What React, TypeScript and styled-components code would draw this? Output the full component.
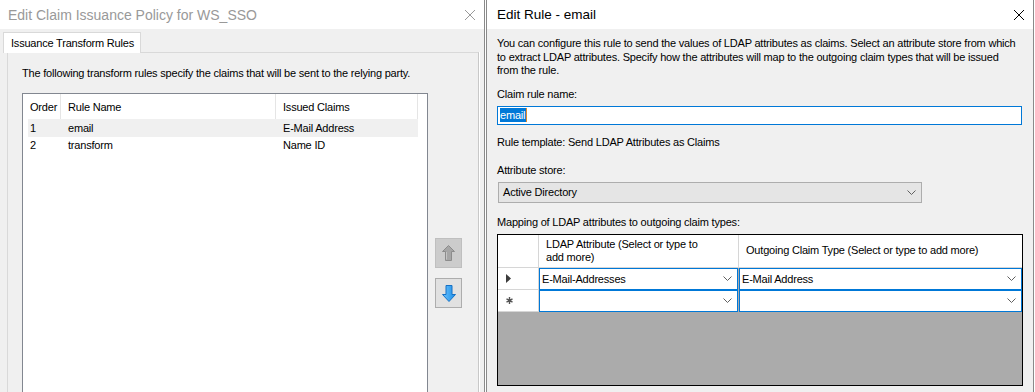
import React from "react";
import styled, { createGlobalStyle } from "styled-components";

const GlobalStyle = createGlobalStyle`
  html, body {
    margin: 0;
    padding: 0;
    background: #ffffff;
    overflow: hidden;
  }
  body {
    font-family: "Liberation Sans", Arial, sans-serif;
    font-size: 11px;
    letter-spacing: -0.2px;
    color: #000;
  }
`;

const rules = [
  { order: 1, name: "email", claims: "E-Mail Address", selected: true },
  { order: 2, name: "transform", claims: "Name ID", selected: false },
];

const Desktop = styled.div`
  display: flex;
  height: 392px;
  overflow: hidden;
`;

const Dialog = styled.div<{ $width: number }>`
  width: ${(p) => p.$width}px;
  flex-shrink: 0;
  display: flex;
  flex-direction: column;
  border-left: 1px solid #8a8a8a;
  border-right: 1px solid #8a8a8a;
  box-sizing: border-box;
  height: 420px;
`;

const LeftDialog = styled(Dialog)`
  border-left: none;
  margin-right: 1px;
`;

const TitleBar = styled.div<{ $inactive?: boolean }>`
  height: 29px;
  flex-shrink: 0;
  background: #fff;
  display: flex;
  align-items: center;
  justify-content: space-between;
  padding: 0 8px 0 ${(p) => (p.$inactive ? 8 : 10)}px;
  font-size: ${(p) => (p.$inactive ? 14 : 13.5)}px;
  letter-spacing: 0;
  color: ${(p) => (p.$inactive ? "#999" : "#000")};
`;

const CloseIcon = ({ color }: { color: string }) => (
  <svg width="12" height="12" viewBox="0 0 12 12">
    <path d="M1 1 L11 11 M11 1 L1 11" stroke={color} strokeWidth="1" fill="none" />
  </svg>
);

const Body = styled.div`
  flex: 1;
  background: #f0f0f0;
  display: flex;
  flex-direction: column;
`;

const TabStrip = styled.div`
  display: flex;
  padding: 3px 0 0 3px;
  position: relative;
  z-index: 1;
  margin-bottom: -1px;
`;

const Tab = styled.div`
  height: 20px;
  padding: 0 6px 0 7px;
  display: flex;
  align-items: center;
  background: #fff;
  border: 1px solid #d9d9d9;
  border-bottom: none;
`;

const TabPage = styled.div`
  flex: 1;
  margin: 0 5px 0 7px;
  border: 1px solid #d9d9d9;
  border-right-color: #c8c8c8;
  box-shadow: 1px 0 0 #fff;
  padding: 13px 0 0 14px;
  display: flex;
  flex-direction: column;
`;

const Caption = styled.div`
  line-height: 14px;
`;

const ListRow = styled.div`
  display: flex;
  margin-top: 13px;
  flex: 1;
`;

const ListView = styled.div`
  width: 406px;
  background: #fff;
  border: 1px solid #828790;
  box-sizing: border-box;
  padding: 0 9px 0 5px;
`;

const ListHeader = styled.div`
  display: grid;
  grid-template-columns: 33px 215px 142px;
  height: 25px;
`;

const HeaderCell = styled.div<{ $first?: boolean }>`
  display: flex;
  align-items: center;
  padding-left: ${(p) => (p.$first ? 2 : 7)}px;
  border-right: 1px solid #e5e5e5;
`;

const ListItem = styled.div<{ $selected?: boolean }>`
  display: grid;
  grid-template-columns: 33px 215px 142px;
  height: 17.5px;
  align-items: center;
  background: ${(p) => (p.$selected ? "#f0f0f0" : "transparent")};
`;

const ItemCell = styled.div<{ $first?: boolean }>`
  padding-left: ${(p) => (p.$first ? 2 : 7)}px;
`;

const ButtonColumn = styled.div`
  display: flex;
  flex-direction: column;
  gap: 10px;
  padding: 145px 0 0 7px;
`;

const MoveButton = styled.div<{ $disabled?: boolean }>`
  width: 27px;
  height: 30px;
  box-sizing: border-box;
  border: 1px solid ${(p) => (p.$disabled ? "#bfbfbf" : "#adadad")};
  background: ${(p) => (p.$disabled ? "#cccccc" : "#e1e1e1")};
  display: flex;
  align-items: center;
  justify-content: center;
`;

const UpArrow = () => (
  <svg width="13" height="16" viewBox="0 0 13 16">
    <path
      d="M6.5 0.5 L12.5 6.5 L9.5 6.5 L9.5 15.5 L3.5 15.5 L3.5 6.5 L0.5 6.5 Z"
      fill="#a6a6a6"
      stroke="#8c8c8c"
      strokeWidth="1"
    />
    <path d="M4.5 7 L4.5 14.5" stroke="#c4c4c4" strokeWidth="1" />
  </svg>
);

const DownArrow = () => (
  <svg width="14" height="17" viewBox="0 0 14 17">
    <defs>
      <linearGradient id="dg" x1="0" x2="1" y1="0" y2="0">
        <stop offset="0" stopColor="#6cc4ff" />
        <stop offset="1" stopColor="#1a8ce6" />
      </linearGradient>
    </defs>
    <path
      d="M4 0.5 L10 0.5 L10 9.5 L13.5 9.5 L7 16.5 L0.5 9.5 L4 9.5 Z"
      fill="url(#dg)"
      stroke="#1670c4"
      strokeWidth="1"
    />
  </svg>
);

const RightBody = styled(Body)`
  padding: 8px 12px 0 10px;
`;

const Paragraph = styled.div`
  line-height: 13.5px;
  white-space: nowrap;
`;

const Label = styled.div<{ $gap: number }>`
  margin-top: ${(p) => p.$gap}px;
  line-height: 14px;
`;

const TextInput = styled.div`
  margin-top: 5px;
  height: 19px;
  width: 525px;
  box-sizing: border-box;
  border: 1px solid #0078d7;
  background: #fff;
  display: flex;
  align-items: center;
  padding-left: 2px;
`;

const Selected = styled.span`
  background: #0078d7;
  color: #fff;
  line-height: 14px;
  padding-right: 1px;
  border-right: 1px solid #e08a2c;
`;

const ComboBox = styled.div`
  margin: 5px 0 0 1px;
  width: 424px;
  height: 21px;
  box-sizing: border-box;
  border: 1px solid #adadad;
  background: #e5e5e5;
  display: flex;
  align-items: center;
  justify-content: space-between;
  padding: 0 5px 0 4px;
`;

const Chevron = () => (
  <svg width="9" height="5" viewBox="0 0 9 5">
    <path d="M0.5 0.5 L4.5 4.5 L8.5 0.5" stroke="#606060" strokeWidth="1" fill="none" />
  </svg>
);

const Grid = styled.div`
  margin-top: 5px;
  width: 526px;
  height: 152px;
  box-sizing: border-box;
  border: 1px solid #000;
  background: #ababab;
`;

const GridRow = styled.div<{ $height: number }>`
  display: grid;
  grid-template-columns: 41px 200px 283px;
  height: ${(p) => p.$height}px;
`;

const GridHeaderCell = styled.div`
  background: #fff;
  border-right: 1px solid #d6d6d6;
  border-bottom: 1px solid #d6d6d6;
  display: flex;
  align-items: center;
  padding: 0 20px 0 7px;
  line-height: 13px;
  &:last-child {
    border-right: none;
    padding-right: 4px;
  }
`;

const RowHeader = styled.div`
  background: #fff;
  border-right: 1px solid #d6d6d6;
  border-bottom: 1px solid #d6d6d6;
  display: flex;
  align-items: center;
  padding-left: 8px;
`;

const CellCombo = styled.div`
  border: 1px solid #0078d7;
  background: #fff;
  display: flex;
  align-items: center;
  justify-content: space-between;
  padding: 0 5px 0 2px;
  margin-right: 1px;
  &:last-child {
    margin-right: 0;
  }
`;

const CurrentRowIcon = () => (
  <svg width="5" height="9" viewBox="0 0 5 9">
    <path d="M0 0 L5 4.5 L0 9 Z" fill="#3c3c3c" />
  </svg>
);

const NewRowIcon = () => (
  <svg width="7" height="7" viewBox="0 0 7 7">
    <path d="M3.5 0 L3.5 7 M0.5 1.8 L6.5 5.2 M6.5 1.8 L0.5 5.2" stroke="#555" strokeWidth="1.4" />
    <circle cx="3.5" cy="3.5" r="1.6" fill="#555" />
  </svg>
);

const App = () => {
  return (
    <Desktop>
      <GlobalStyle />
      <LeftDialog $width={485}>
        <TitleBar $inactive>
          Edit Claim Issuance Policy for WS_SSO
          <CloseIcon color="#999" />
        </TitleBar>
        <Body>
          <TabStrip>
            <Tab>Issuance Transform Rules</Tab>
          </TabStrip>
          <TabPage>
            <Caption>
              The following transform rules specify the claims that will be sent to the relying party.
            </Caption>
            <ListRow>
              <ListView>
                <ListHeader>
                  <HeaderCell $first>Order</HeaderCell>
                  <HeaderCell>Rule Name</HeaderCell>
                  <HeaderCell>Issued Claims</HeaderCell>
                </ListHeader>
                {rules.map((rule) => (
                  <ListItem key={rule.order} $selected={rule.selected}>
                    <ItemCell $first>{rule.order}</ItemCell>
                    <ItemCell>{rule.name}</ItemCell>
                    <ItemCell>{rule.claims}</ItemCell>
                  </ListItem>
                ))}
              </ListView>
              <ButtonColumn>
                <MoveButton $disabled>
                  <UpArrow />
                </MoveButton>
                <MoveButton>
                  <DownArrow />
                </MoveButton>
              </ButtonColumn>
            </ListRow>
          </TabPage>
        </Body>
      </LeftDialog>

      <Dialog $width={548}>
        <TitleBar>
          Edit Rule - email
          <CloseIcon color="#000" />
        </TitleBar>
        <RightBody>
          <Paragraph>
            You can configure this rule to send the values of LDAP attributes as claims. Select an attribute store from which
            <br />
            to extract LDAP attributes. Specify how the attributes will map to the outgoing claim types that will be issued
            <br />
            from the rule.
          </Paragraph>
          <Label $gap={9}>Claim rule name:</Label>
          <TextInput>
            <Selected>email</Selected>
          </TextInput>
          <Label $gap={10}>Rule template: Send LDAP Attributes as Claims</Label>
          <Label $gap={14}>Attribute store:</Label>
          <ComboBox>
            Active Directory
            <Chevron />
          </ComboBox>
          <Label $gap={12}>Mapping of LDAP attributes to outgoing claim types:</Label>
          <Grid>
            <GridRow $height={33}>
              <GridHeaderCell />
              <GridHeaderCell>LDAP Attribute (Select or type to add more)</GridHeaderCell>
              <GridHeaderCell>Outgoing Claim Type (Select or type to add more)</GridHeaderCell>
            </GridRow>
            <GridRow $height={22}>
              <RowHeader>
                <CurrentRowIcon />
              </RowHeader>
              <CellCombo>
                E-Mail-Addresses
                <Chevron />
              </CellCombo>
              <CellCombo>
                E-Mail Address
                <Chevron />
              </CellCombo>
            </GridRow>
            <GridRow $height={22}>
              <RowHeader>
                <NewRowIcon />
              </RowHeader>
              <CellCombo>
                <span />
                <Chevron />
              </CellCombo>
              <CellCombo>
                <span />
                <Chevron />
              </CellCombo>
            </GridRow>
          </Grid>
        </RightBody>
      </Dialog>
    </Desktop>
  );
};

export default App;
